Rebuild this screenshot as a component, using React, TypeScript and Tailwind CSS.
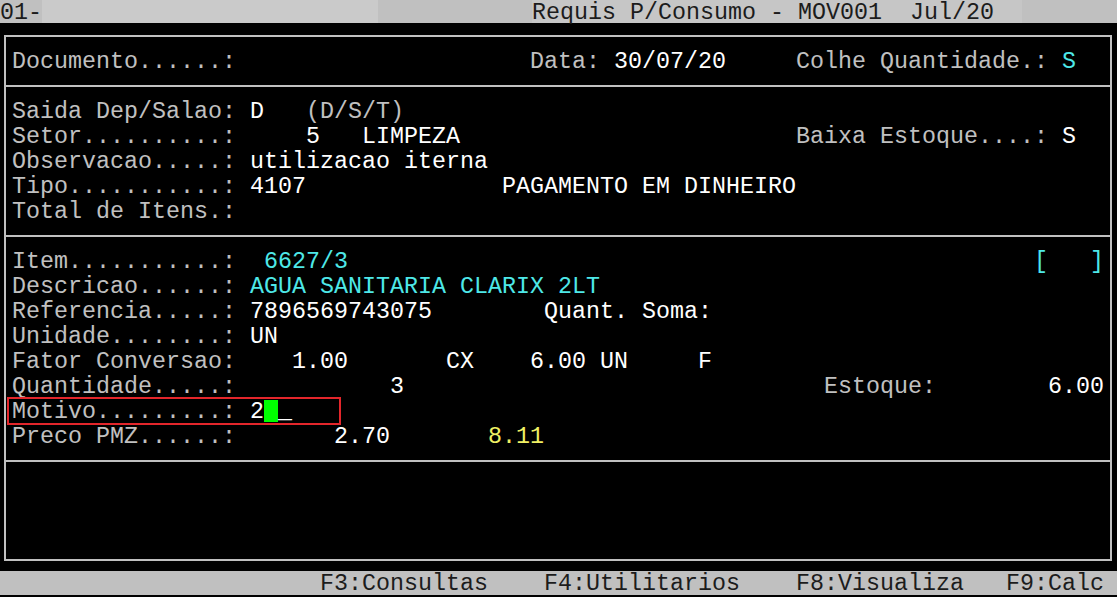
type Seg = [string, 'g' | 'w' | 'c' | 'y'];

const tone = {
  g: 'text-[#c0c0c0]',
  w: 'text-white',
  c: 'text-[#4ee8e8]',
  y: 'text-[#f0f064]',
};

function Line({ segs }: { segs: Seg[] }) {
  return (
    <div className="h-[25px] leading-[25px] whitespace-pre">
      {segs.map(([t, c], i) => (
        <span key={i} className={tone[c]}>
          {t}
        </span>
      ))}
    </div>
  );
}

const header: Seg[][] = [
  [
    ['Saida Dep/Salao: ', 'g'],
    ['D', 'w'],
    ['   (D/S/T)', 'g'],
  ],
  [
    ['Setor..........: ', 'g'],
    ['    5   LIMPEZA', 'w'],
    ['                        Baixa Estoque....: ', 'g'],
    ['S', 'w'],
  ],
  [
    ['Observacao.....: ', 'g'],
    ['utilizacao iterna', 'w'],
  ],
  [
    ['Tipo...........: ', 'g'],
    ['4107              PAGAMENTO EM DINHEIRO', 'w'],
  ],
  [['Total de Itens.:', 'g']],
];

const item: Seg[][] = [
  [
    ['Item...........:  ', 'g'],
    ['6627/3', 'c'],
    ['                                                 ', 'g'],
    ['[   ]', 'c'],
  ],
  [
    ['Descricao......: ', 'g'],
    ['AGUA SANITARIA CLARIX 2LT', 'c'],
  ],
  [
    ['Referencia.....: ', 'g'],
    ['7896569743075        Quant. Soma:', 'w'],
  ],
  [
    ['Unidade........: ', 'g'],
    ['UN', 'w'],
  ],
  [
    ['Fator Conversao:', 'g'],
    ['    1.00       CX    6.00 UN     F', 'w'],
  ],
  [
    ['Quantidade.....:', 'g'],
    ['           3                              ', 'w'],
    ['Estoque:', 'g'],
    ['        6.00', 'w'],
  ],
];

export default function App() {
  return (
    <div className="w-[1117px] h-[597px] bg-black overflow-hidden font-['Liberation_Mono','Courier_New',monospace] text-[23.33px]">
      {/* title bar */}
      <div className="h-[23px] bg-[#c0c0c0] text-[#1c1c1c] flex items-start whitespace-pre leading-[26px]">
        <div className="h-[23px]">01-</div>
        <div className="w-[336px] h-[23px] bg-[#cacaca]"></div>
        <div className="h-[23px]">{'           '}</div>
        <div className="h-[23px] bg-[#c6c6c6]">{'Requis P/Consumo - MOV001  Jul/20  '}</div>
      </div>

      <div className="pt-[12px] pl-[4px]">
        <div className="w-[1108px] border-2 border-[#c0c0c0]">
          <div className="pl-[6px] pt-[13px] pb-[10px]">
            <Line
              segs={[
                ['Documento......:                     Data: ', 'g'],
                ['30/07/20', 'w'],
                ['     Colhe Quantidade.: ', 'g'],
                ['S', 'c'],
              ]}
            />
          </div>

          <div className="border-t-2 border-[#c0c0c0] pl-[6px] pt-[13px] pb-[10px]">
            {header.map((s, i) => (
              <Line key={i} segs={s} />
            ))}
          </div>

          <div className="border-t-2 border-[#c0c0c0] pl-[6px] pt-[13px] pb-[10px]">
            {item.map((s, i) => (
              <Line key={i} segs={s} />
            ))}
            <div className="relative h-[25px] leading-[25px] whitespace-pre">
              <span className="text-[#c0c0c0]">Motivo.........: </span>
              <span className="text-white">2</span>
              <span className="inline-block w-[14px] h-[22px] align-[-4px] bg-[#00ff00]"></span>
              <span className="text-white">_</span>
              {/* highlight box over the field */}
              <div className="absolute left-[-5px] top-[-3px] w-[334px] h-[28px] border-2 border-[#e3262b]"></div>
            </div>
            <Line
              segs={[
                ['Preco PMZ......:', 'g'],
                ['       2.70       ', 'w'],
                ['8.11', 'y'],
              ]}
            />
          </div>

          <div className="border-t-2 border-[#c0c0c0] h-[99px]"></div>
        </div>
      </div>

      {/* function key bar */}
      <div className="mt-[10px] h-[24px] bg-[#c0c0c0] text-[#1c1c1c] pl-[12px] pt-[2px] leading-[22px] whitespace-pre">
        {'                      F3:Consultas    F4:Utilitarios    F8:Visualiza   F9:Calc'}
      </div>
    </div>
  );
}
